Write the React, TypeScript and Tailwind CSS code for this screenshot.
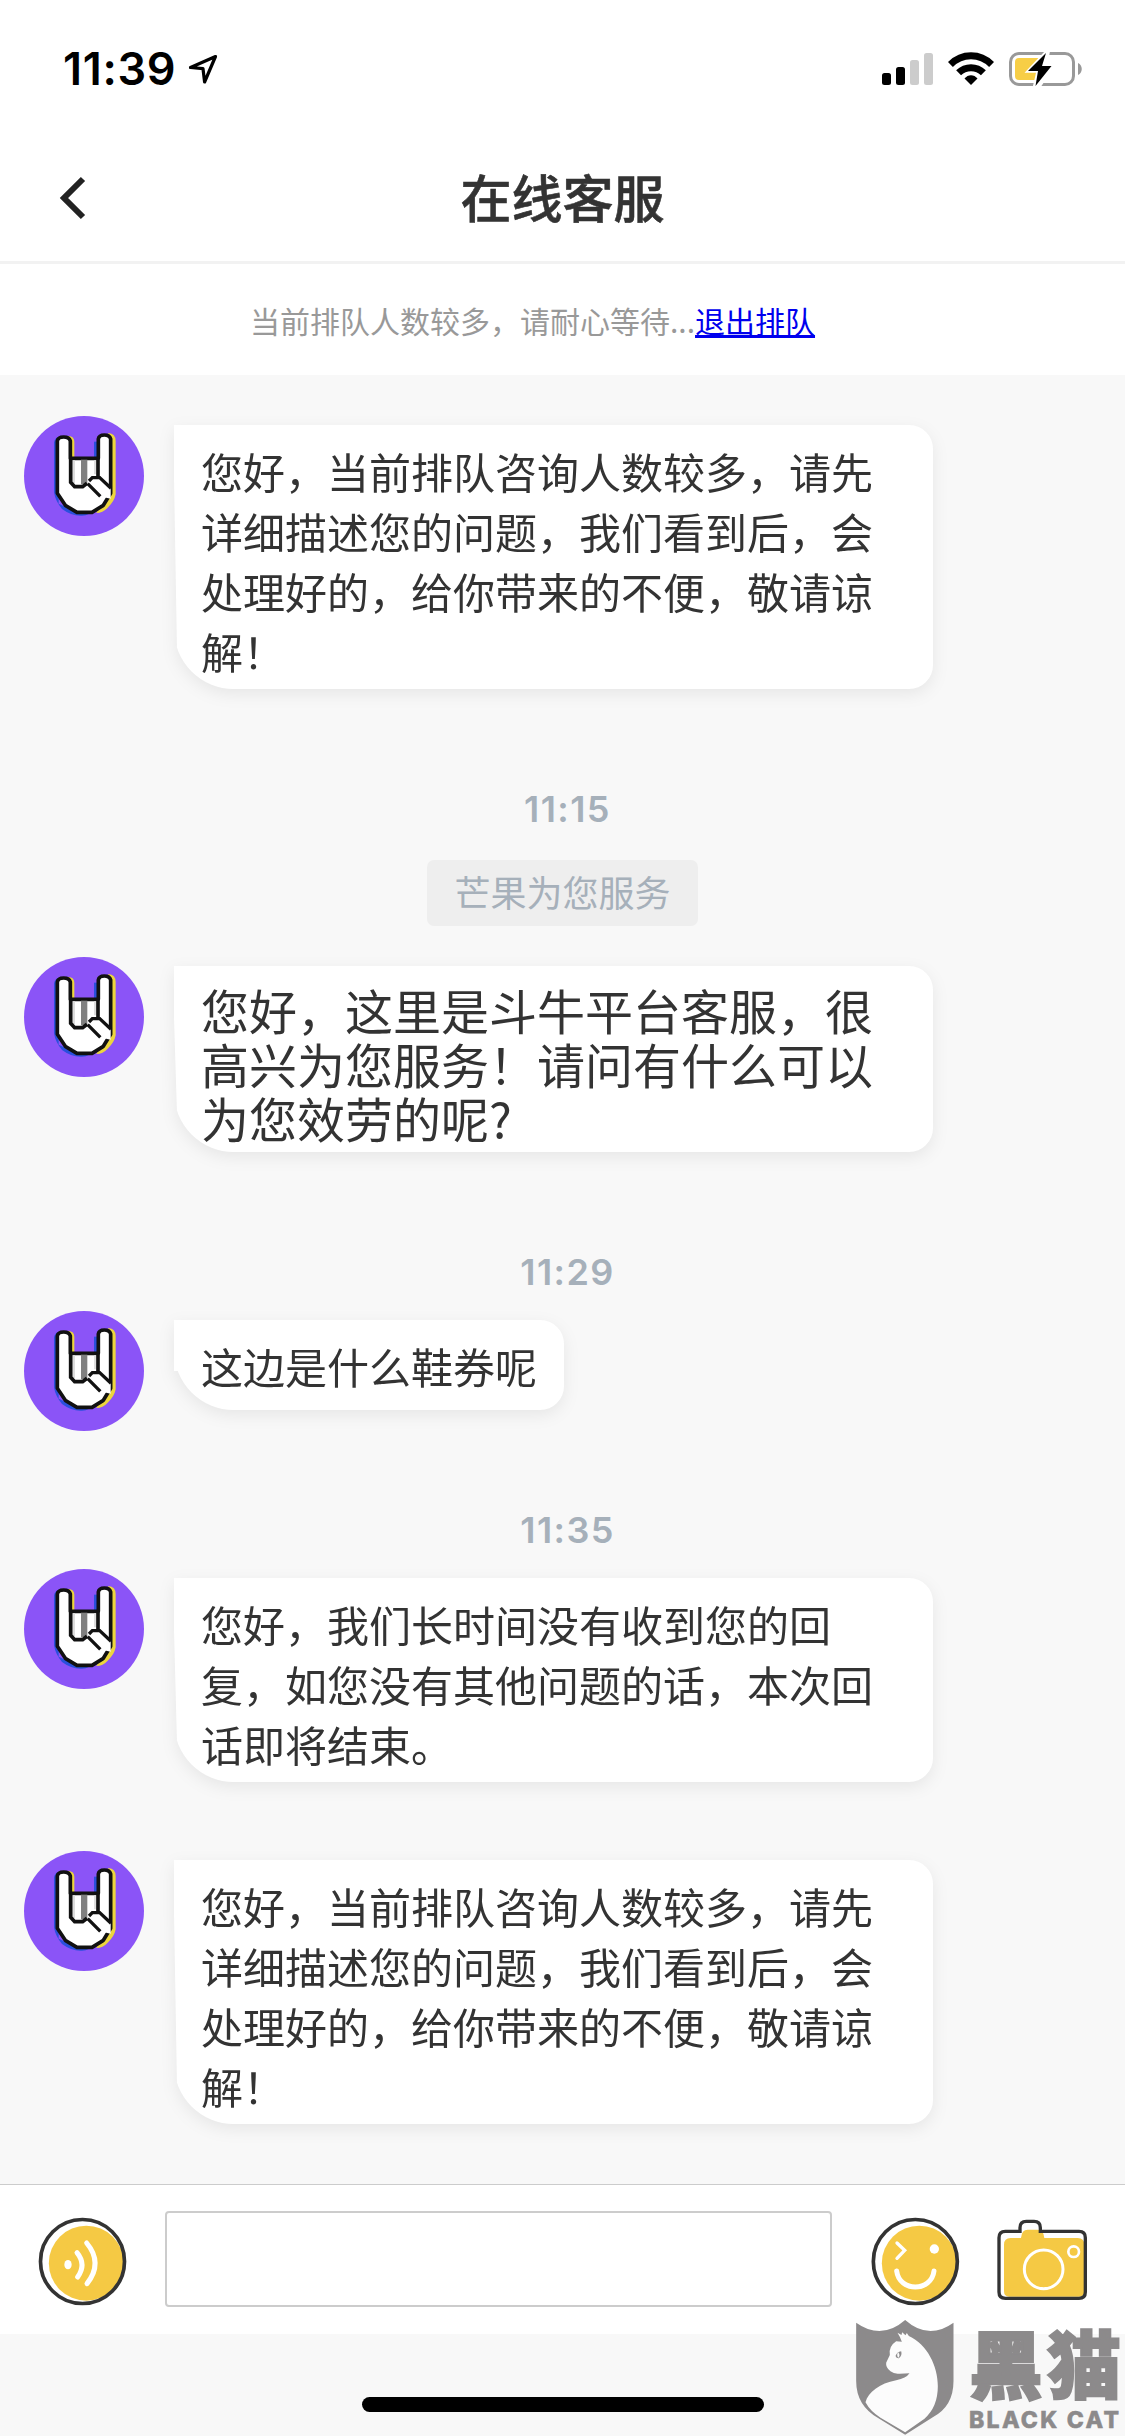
import React from 'react';

interface Message {
  id: number;
  text: string;
  time?: string;
  notice?: string;
  large?: boolean;
  className: string;
}

const QUEUE_TEXT = '您好，当前排队咨询人数较多，请先详细描述您的问题，我们看到后，会处理好的，给你带来的不便，敬请谅解！';

const messages: Message[] = [
  { id: 1, text: QUEUE_TEXT, className: 'mt-[41px]' },
  { id: 2, text: '您好，这里是斗牛平台客服，很高兴为您服务！请问有什么可以为您效劳的呢?', time: '11:15', notice: '芒果为您服务', large: true, className: 'mt-[93px]' },
  { id: 3, text: '这边是什么鞋券呢', time: '11:29', className: 'mt-[93px]' },
  { id: 4, text: '您好，我们长时间没有收到您的回复，如您没有其他问题的话，本次回话即将结束。', time: '11:35', className: 'mt-[72px]' },
  { id: 5, text: QUEUE_TEXT, className: 'mt-[69px]' },
];

const StatusBar: React.FC = () => (
  <div className="flex h-[138px] items-start justify-between pl-[63px] pr-[43px] pt-[52px]">
    <div className="flex items-start">
      <span className="-mt-[9px] w-[125px] font-[Inter] text-[45px] font-semibold leading-[52px] tracking-[0.7px] text-black">11:39</span>
      <svg className="mt-[2px]" width="30" height="31" viewBox="0 0 30 31" fill="none">
        <path d="M27.5 2.5 2.5 13.5l12.5 1.2 1.6 13.3Z" stroke="#000" strokeWidth="3.2" strokeLinejoin="round" />
      </svg>
    </div>
    <div className="flex items-start">
      <svg width="51" height="34" viewBox="0 0 51 34">
        <rect x="0" y="21" width="9" height="12" rx="2.5" fill="#000" />
        <rect x="14" y="15" width="9" height="18" rx="2.5" fill="#000" />
        <rect x="28" y="8" width="9" height="25" rx="2.5" fill="#ccc" />
        <rect x="42" y="1" width="9" height="32" rx="2.5" fill="#ccc" />
      </svg>
      <svg className="ml-[15px]" width="46" height="34" viewBox="0 0 46 34" fill="none" stroke="#000" strokeWidth="7">
        <path d="M2.4 12.5C14 .8 32 .8 43.600 12.500" />
        <path d="M10.600 20.800C17.500 14 28.500 14 35.400 20.800" />
        <path d="M16.500 26.500C20 22 26 22 29.500 26.500L23 33Z" fill="#000" stroke="none" />
      </svg>
      <svg className="ml-[15px]" width="73" height="34" viewBox="0 0 73 34">
        <rect x="1.500" y="1.500" width="63" height="31" rx="8.500" fill="none" stroke="#999" strokeWidth="3" />
        <rect x="6" y="6" width="27" height="22" rx="4" fill="#f7ce46" />
        <path d="M69 11c5 2 5 10 0 12Z" fill="#999" />
        <path d="M36 -1 15.500 20.800H27L23.500 36H31L47 13H38.500L41 -1Z" fill="#fff" />
        <path d="M37 1 19 19h10l-2.500 15L42.500 14H33Z" fill="#000" />
      </svg>
    </div>
  </div>
);

const Header: React.FC = () => (
  <header className="relative flex h-[126px] items-center justify-center border-b-[3px] border-[#f2f2f2] pb-[8px]">
    <svg className="absolute left-[58px] top-[37px]" width="30" height="46" viewBox="0 0 30 46" fill="none">
      <path d="M25 4 6 23l19 19" stroke="#222" strokeWidth="6" />
    </svg>
    <h1 className="text-[51px] font-medium leading-[60px] text-[#333] [-webkit-text-stroke:0.6px_#333]">在线客服</h1>
  </header>
);

const Avatar: React.FC = () => (
  <svg className="shrink-0" width="120" height="120" viewBox="0 0 120 120">
    <circle cx="60" cy="60" r="60" fill="#8b54f7" />
    <g transform="translate(21 9) scale(0.3333)">
      <path d="M27 52q3-14 14-16v200l40 18h60q-5 17-30 18-30 2-60-20-20-24-24-50Z" fill="#2a50dd" />
      <path d="M147 50h12v50h-12Z" fill="#2a50dd" />
      <path d="M70 32q18 2 18 18v48H76ZM190 24q22 2 22 24v160q-4 22-24 40-14 16-34 16l34-60Z" fill="#ecd63d" />
      <path
        d="M37 205V48q2-12 19-12t20 12v52h84V42q2-12 18-12t19 12v163l-22 36-34 21H96l-34-20Z"
        fill="#fff"
        stroke="#111"
        strokeWidth="11"
        strokeLinejoin="round"
      />
      <path d="M108 104h19v74h-19Z" fill="#808080" />
      <path d="M82 106h8v68h-8ZM147 106h7v42h-7Z" fill="#ddd" />
      <path d="M77 100v72l12 13h24l13-10M159 100v54" fill="none" stroke="#111" strokeWidth="11" />
      <path d="m132 172 9-13h22l34 28v34l-36-8Z" fill="#fff" />
      <path d="m128 176 38 38M132 168l10-10h22l34 32" fill="none" stroke="#111" strokeWidth="10" />
    </g>
  </svg>
);

const Bubble: React.FC<{ text: string; large?: boolean }> = ({ text, large }) => (
  <div className="ml-[30px] mt-[9px] max-w-[759px] drop-shadow-[0_5px_8px_rgba(0,0,0,0.07)]">
    <div className="relative rounded-[24px] rounded-bl-[60px] rounded-tl-none bg-white pb-[8px] pl-[27px] pr-[27px] pt-[16px] [clip-path:polygon(0_0,100%_0,100%_100%,3px_100%,3px_calc(100%_-_39px),0_51px)]">
      <span className="absolute left-0 top-0 h-[51px] w-[30px] bg-white" />
      <p className={large ? 'relative w-[705px] text-[48px] leading-[54px] text-[#333]' : 'relative min-h-[66px] max-w-[705px] text-[42px] leading-[60px] text-[#333]'}>
        {text}
      </p>
    </div>
  </div>
);

const MessageItem: React.FC<{ message: Message }> = ({ message }) => (
  <div className={message.className}>
    {message.time && (
      <p className="mb-[12px] pl-[10px] text-center font-[Inter] text-[36px] font-semibold leading-[54px] tracking-[1.4px] text-[#a6b0ba]">{message.time}</p>
    )}
    {message.notice && (
      <div className="mb-[31px] mt-[24px] flex justify-center">
        <span className="h-[66px] rounded-[7px] bg-[#eee] px-[27px] text-[36px] leading-[62px] text-[#a6b0ba]">{message.notice}</span>
      </div>
    )}
    <div className="flex items-start pl-6">
      <Avatar />
      <Bubble text={message.text} large={message.large} />
    </div>
  </div>
);

const VoiceIcon: React.FC = () => (
  <svg width="89" height="89" viewBox="114 112 267 267" fill="none">
    <circle cx="259" cy="250.500" r="112.500" fill="#f5c944" />
    <circle cx="247.500" cy="245.500" r="126" stroke="#333" strokeWidth="11" />
    <ellipse cx="204" cy="255" rx="11" ry="14" fill="#fff" />
    <path d="M231 219q29 36 2 73M260 190q50 60 1 122" stroke="#fff" strokeWidth="15" strokeLinecap="round" />
  </svg>
);

const EmojiIcon: React.FC = () => (
  <svg width="89" height="89" viewBox="152 112 267 267" fill="none">
    <circle cx="297" cy="250.500" r="112.500" fill="#f5c944" />
    <circle cx="285" cy="245.500" r="126" stroke="#333" strokeWidth="11" />
    <path d="m230 190 23 22-23 24" stroke="#fff" strokeWidth="10" strokeLinecap="round" />
    <circle cx="342" cy="208" r="14" fill="#fff" />
    <path d="M229 274c8 64 104 64 112 0" stroke="#fff" strokeWidth="15" strokeLinecap="round" />
  </svg>
);

const CameraIcon: React.FC = () => (
  <svg width="90" height="82" viewBox="531 118 270 246" fill="none">
    <path d="M552 195q0-20 20-20h31q2-25 20-25h30q18 0 20 25h100q20 0 20 20v140q0 16-16 16H568q-16 0-16-16Z" fill="#f5c944" />
    <path
      d="M556 155h44v-11q0-19 19-19h23q19 0 19 19v11h116q19 0 19 19v163q0 19-19 19H556q-19 0-19-19V174q0-19 19-19Z"
      stroke="#333"
      strokeWidth="10"
    />
    <circle cx="671" cy="269" r="58" stroke="#fff" strokeWidth="9" />
    <circle cx="761" cy="216" r="16" stroke="#fff" strokeWidth="8" />
  </svg>
);

const Composer: React.FC = () => (
  <div className="flex h-[150px] items-start border-t border-[#ccc] bg-white pl-[38px] pt-[26px]">
    <div className="mt-[6px]">
      <VoiceIcon />
    </div>
    <div className="ml-[38px] h-[96px] w-[667px] rounded-[4px] border-2 border-[#ccc] bg-white" />
    <div className="ml-[39px] mt-[6px]">
      <EmojiIcon />
    </div>
    <div className="ml-[37px] mt-[8px]">
      <CameraIcon />
    </div>
  </div>
);

const Watermark: React.FC = () => (
  <div className="absolute bottom-0 right-0 flex h-[116px] w-[269px] items-start text-[#8c8a8b]">
    <svg className="shrink-0" width="98" height="115" viewBox="108 423 293 345">
      <path
        d="M108 431q76 54 147-8 70 62 145 8v175q0 75-61 108l-84 53-80-49q-67-38-67-112Z"
        fill="currentColor"
      />
      <path
        d="M245 488q-5-15-13-27l12 7 2-8 10 9 4-7 6 9c55 25 87 90 87 151q0 62-40 97l-58 41-74-44q-30-18-45-46c8-30 42-57 92-66q30-6 40-21l-30 1q-16 2-27-7-15-12-13-26l11-23q-4-26 19-41Z"
        fill="#fcfcfc"
      />
      <path d="M226 531q4-12 17-14 4 12-7 21Q229 539 226 531Z" fill="currentColor" />
      <path d="M234 520q-6 7 0 17 8-8 0-17Z" fill="#fcfcfc" />
    </svg>
    <div className="ml-[15px] flex flex-col">
      <span className="h-[88px] w-[156px] whitespace-nowrap text-[74px] font-black leading-[81px] tracking-[4px] [-webkit-text-stroke:2px_#8c8a8b]">黑猫</span>
      <span className="whitespace-nowrap font-[Inter] text-[23px] font-extrabold leading-[24px] tracking-[2.3px] [-webkit-text-stroke:0.5px_#8c8a8b]">BLACK CAT</span>
    </div>
  </div>
);

export default function App() {
  return (
    <div className="relative flex h-[2436px] w-[1125px] flex-col overflow-hidden bg-[#f8f8f8] font-['Noto_Sans_CJK_SC',sans-serif]">
      <div className="bg-white">
        <StatusBar />
        <Header />
        <p className="h-[111px] pl-[250px] text-[30px] leading-[113px] text-[#999]">
          当前排队人数较多，请耐心等待...<a className="text-[#0000ee] underline">退出排队</a>
        </p>
      </div>
      <main className="h-[1809px] shrink-0">
        {messages.map((m) => (
          <MessageItem key={m.id} message={m} />
        ))}
      </main>
      <Composer />
      <div className="mx-auto mt-[63px] h-[15px] w-[402px] rounded-full bg-black" />
      <Watermark />
    </div>
  );
}
